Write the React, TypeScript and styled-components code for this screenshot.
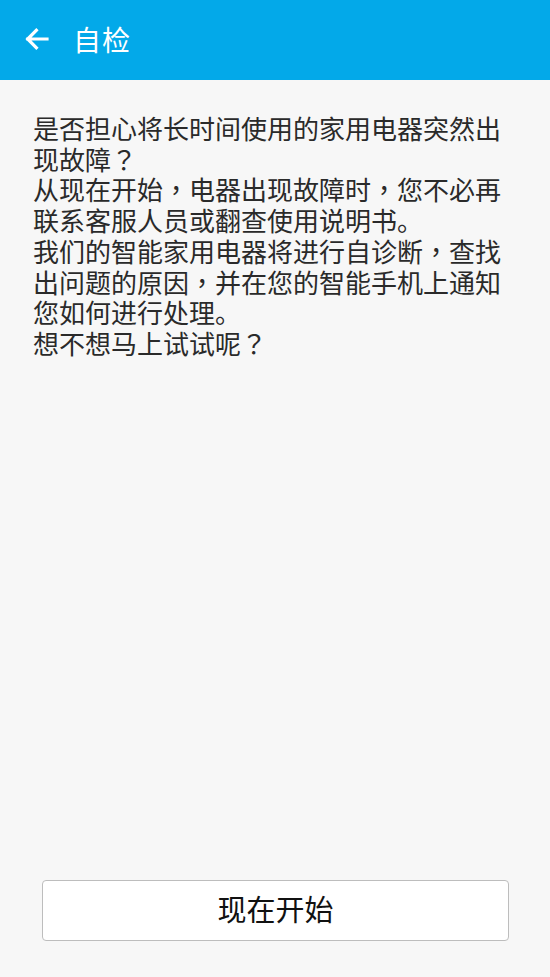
import styled, { createGlobalStyle } from "styled-components";

const GlobalStyle = createGlobalStyle`
  html, body {
    margin: 0;
    padding: 0;
    background: #f7f7f7;
  }
  body {
    font-family: "Noto Sans CJK SC", "Noto Sans", Roboto, sans-serif;
  }
`;

const lines = [
  "是否担心将长时间使用的家用电器突然出现故障？",
  "从现在开始，电器出现故障时，您不必再联系客服人员或翻查使用说明书。",
  "我们的智能家用电器将进行自诊断，查找出问题的原因，并在您的智能手机上通知您如何进行处理。",
  "想不想马上试试呢？",
];

// the device font centres full-width commas and question marks in their cell
const renderLine = (text: string) =>
  text.split(/([，？])/).map((part, i) =>
    part === "，" || part === "？" ? <Punct key={i}>{part}</Punct> : part
  );

export default function App() {
  return (
    <>
      <GlobalStyle />
      <Page>
        <Header>
          <BackButton aria-label="back">
            <svg width="32" height="32" viewBox="0 0 24 24" fill="none">
              <path
                d="M19.5 12H5M11.5 5.5L5 12l6.5 6.5"
                stroke="#fff"
                strokeWidth="2.4"
                strokeLinecap="square"
              />
            </svg>
          </BackButton>
          <Title>自检</Title>
        </Header>
        <Content>
          {lines.map((l) => (
            <Paragraph key={l}>{renderLine(l)}</Paragraph>
          ))}
        </Content>
        <Footer>
          <StartButton>现在开始</StartButton>
        </Footer>
      </Page>
    </>
  );
}

const Page = styled.div`
  display: flex;
  flex-direction: column;
  height: 977px;
  width: 550px;
  background: #f7f7f7;
`;

const Header = styled.div`
  display: flex;
  align-items: center;
  height: 80px;
  padding-left: 20px;
  background: #03a9e9;
  flex-shrink: 0;
`;

const BackButton = styled.div`
  display: flex;
  align-items: center;
  justify-content: center;
  width: 34px;
  height: 34px;
  margin-top: -2px;
`;

const Title = styled.div`
  margin-left: 19px;
  margin-top: -2px;
  color: #ffffff;
  font-size: 28px;
  letter-spacing: 1px;
`;

const Content = styled.div`
  flex: 1;
  padding: 33px 33px 0 33px;
`;

const Paragraph = styled.div`
  color: #2a2a2a;
  font-size: 26px;
  line-height: 30.7px;
`;

const Punct = styled.span`
  font-family: "Noto Sans CJK TC", "Noto Sans CJK SC", sans-serif;
`;

const Footer = styled.div`
  display: flex;
  justify-content: center;
  padding: 0 41px 36px 42px;
`;

const StartButton = styled.button`
  width: 100%;
  height: 61px;
  background: #ffffff;
  border: 1.5px solid #bdbdbd;
  border-radius: 4px;
  color: #111;
  font-family: "Noto Sans CJK SC", sans-serif;
  font-size: 29px;
  padding: 0 0 6px 0;
`;
